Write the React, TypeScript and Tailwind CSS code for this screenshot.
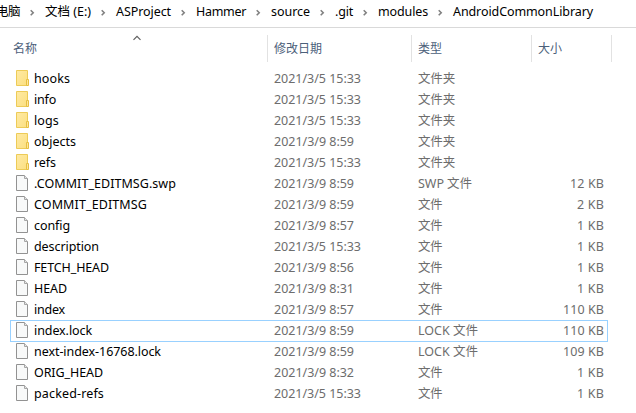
import { useLayoutEffect, useRef, useState } from "react";

// Text whose letter spacing is adjusted so that it spans the given width.
function Fit({ text, width }: { text: string; width: number }) {
  const ref = useRef<HTMLSpanElement>(null);
  const [spacing, setSpacing] = useState(0);
  useLayoutEffect(() => {
    if (!ref.current) return;
    const natural = ref.current.getBoundingClientRect().width;
    setSpacing((width - natural) / text.length);
  }, [text, width]);
  return (
    <span ref={ref} className="inline-block whitespace-pre" style={{ letterSpacing: spacing }}>
      {text}
    </span>
  );
}

const crumbs: [string, number][] = [
  ["电脑", 24],
  ["文档 (E:)", 46],
  ["ASProject", 55],
  ["Hammer", 50],
  ["source", 39],
  [".git", 18],
  ["modules", 50],
  ["AndroidCommonLibrary", 140],
];

type Row = { name: string; w: number; date: string; type: string; size?: string; selected?: boolean };

const rows: Row[] = [
  { name: "hooks", w: 36, date: "2021/3/5 15:33", type: "文件夹" },
  { name: "info", w: 22, date: "2021/3/5 15:33", type: "文件夹" },
  { name: "logs", w: 25, date: "2021/3/5 15:33", type: "文件夹" },
  { name: "objects", w: 42, date: "2021/3/9 8:59", type: "文件夹" },
  { name: "refs", w: 22, date: "2021/3/5 15:33", type: "文件夹" },
  { name: ".COMMIT_EDITMSG.swp", w: 142, date: "2021/3/9 8:59", type: "SWP 文件", size: "12 KB" },
  { name: "COMMIT_EDITMSG", w: 113, date: "2021/3/9 8:59", type: "文件", size: "2 KB" },
  { name: "config", w: 36, date: "2021/3/9 8:57", type: "文件", size: "1 KB" },
  { name: "description", w: 65, date: "2021/3/5 15:33", type: "文件", size: "1 KB" },
  { name: "FETCH_HEAD", w: 75, date: "2021/3/9 8:56", type: "文件", size: "1 KB" },
  { name: "HEAD", w: 33, date: "2021/3/9 8:31", type: "文件", size: "1 KB" },
  { name: "index", w: 31, date: "2021/3/9 8:57", type: "文件", size: "110 KB" },
  { name: "index.lock", w: 58, date: "2021/3/9 8:59", type: "LOCK 文件", size: "110 KB", selected: true },
  { name: "next-index-16768.lock", w: 127, date: "2021/3/9 8:59", type: "LOCK 文件", size: "109 KB" },
  { name: "ORIG_HEAD", w: 69, date: "2021/3/9 8:32", type: "文件", size: "1 KB" },
  { name: "packed-refs", w: 70, date: "2021/3/5 15:33", type: "文件", size: "1 KB" },
];

const typeWidths: Record<string, number> = { 文件夹: 37, 文件: 24, "SWP 文件": 54, "LOCK 文件": 60 };
const sizeWidths: Record<string, number> = { "1 KB": 27, "2 KB": 27, "12 KB": 34, "110 KB": 41, "109 KB": 41 };

function FolderIcon() {
  return (
    <svg width="13" height="16" viewBox="0 0 13 16" className="mb-px shrink-0">
      <defs>
        <linearGradient id="folder" x1="0" y1="0" x2="1" y2="1">
          <stop offset="0" stopColor="#ffeaa4" />
          <stop offset="1" stopColor="#fbdf80" />
        </linearGradient>
      </defs>
      <path d="M.5.5h11v15H.5z" fill="url(#folder)" stroke="#edcb57" />
      <path d="M10.5 9.5h2v6h-2z" fill="#ffe69a" stroke="#e6bf42" />
    </svg>
  );
}

function FileIcon() {
  return (
    <svg width="13" height="16" viewBox="0 0 13 16" className="mb-px shrink-0">
      <path d="M.5.5h8l3 3v12H.5z" fill="#f8f9f9" stroke="#929292" />
      <path d="M8.5.5v3h3" fill="#e6e6e6" stroke="#a6a6a6" />
    </svg>
  );
}

function Chevron() {
  return (
    <svg width="25" height="8" viewBox="0 0 25 8" className="mt-[2px] shrink-0">
      <path d="M10.7 1.3l2.5 2.5-2.5 2.5" fill="none" stroke="#808080" strokeWidth="1.6" />
    </svg>
  );
}

export default function App() {
  return (
    <div className="h-[413px] w-[636px] overflow-hidden bg-white font-['Noto_Sans','Noto_Sans_CJK_SC',sans-serif] text-[12.5px] leading-[20px] text-black">
      <nav className="flex h-7 items-center border-b border-[#d9d9d9] pb-[3px]">
        <div className="-ml-1 flex items-center">
          {crumbs.map(([text, width], i) => (
            <div key={text} className="flex items-center">
              {i > 0 && <Chevron />}
              <Fit text={text} width={width} />
            </div>
          ))}
        </div>
      </nav>

      <header className="flex h-10 pt-[7px] text-[12px] text-[#4c607a]">
        <div className="flex h-[27px] w-[268px] items-center border-r border-[#e2e2e2] pl-[13px]">
          <Fit text="名称" width={24} />
          <svg width="10" height="6" viewBox="0 0 10 6" className="mb-[22px] ml-[95px]">
            <path d="M1.5 4.8L5 1.3l3.5 3.5" fill="none" stroke="#606060" strokeWidth="1.2" />
          </svg>
        </div>
        <div className="flex h-[27px] w-36 items-center border-r border-[#e2e2e2] pl-[6px]">
          <Fit text="修改日期" width={48} />
        </div>
        <div className="flex h-[27px] w-[120px] items-center border-r border-[#e2e2e2] pl-[6px]">
          <Fit text="类型" width={24} />
        </div>
        <div className="flex h-[27px] w-20 items-center border-r border-[#e2e2e2] pl-[6px]">
          <Fit text="大小" width={24} />
        </div>
      </header>

      <main className="ml-[10px] w-[598px]">
        {rows.map((r) => (
          <div
            key={r.name}
            className={
              r.selected
                ? "-mb-px flex h-[22px] items-center border border-[#99d1ff] pr-[3px] pb-px pl-[5px]"
                : "flex h-[21px] items-center pr-1 pl-[6px]"
            }
          >
            <div className="flex w-[258px] items-center">
              {r.size ? <FileIcon /> : <FolderIcon />}
              <span className="ml-[5px]">
                <Fit text={r.name} width={r.w} />
              </span>
            </div>
            <div className="w-36 text-[#6d6d6d]">
              <Fit text={r.date} width={r.date.length === 14 ? 87 : 80} />
            </div>
            <div className="w-[100px] text-[#6d6d6d]">
              <Fit text={r.type} width={typeWidths[r.type]} />
            </div>
            <div className="flex flex-1 justify-end text-[#6d6d6d]">
              {r.size && <Fit text={r.size} width={sizeWidths[r.size]} />}
            </div>
          </div>
        ))}
      </main>
    </div>
  );
}
